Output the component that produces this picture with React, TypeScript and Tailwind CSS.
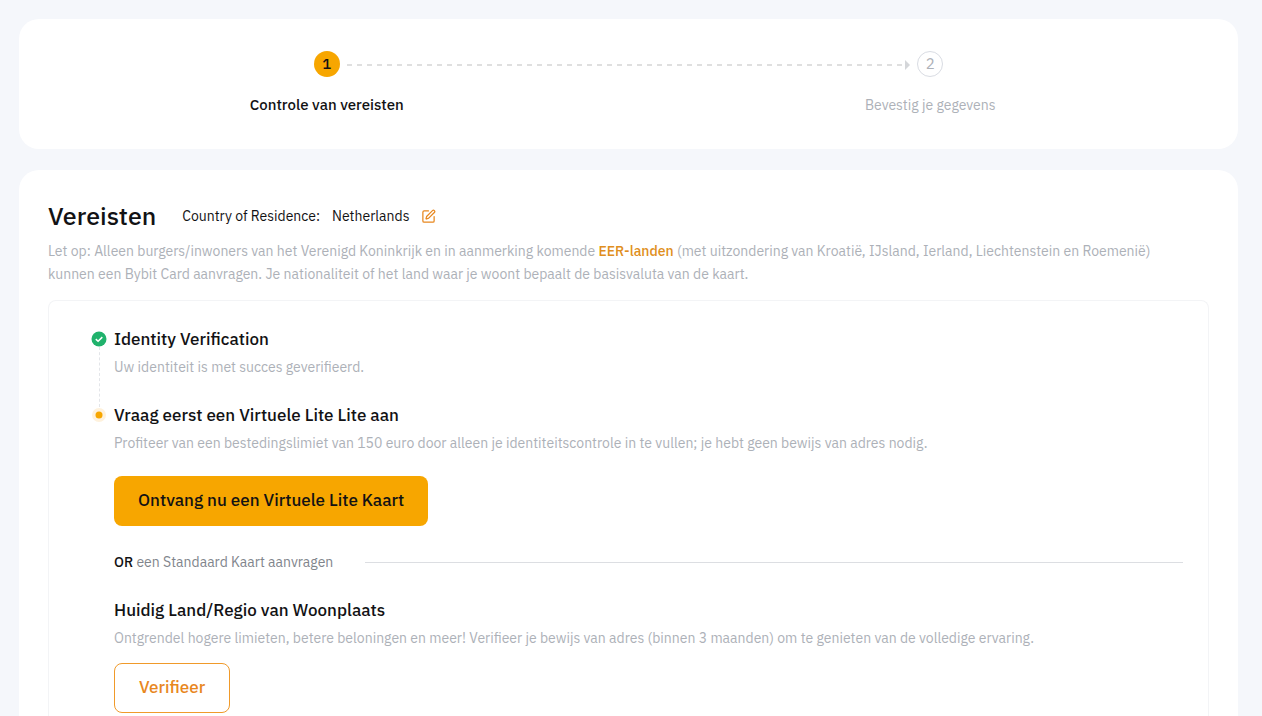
import { SquarePen } from 'lucide-react';
import type { ReactNode } from 'react';

function Stepper() {
  return (
    <section className="rounded-[20px] bg-white px-1.5 pt-8 pb-8">
      <ol className="grid grid-cols-4 items-center gap-y-4 text-sm leading-6">
        <li className="contents">
          <span className="col-span-2 col-start-1 row-start-1 flex size-[26px] items-center justify-center justify-self-center rounded-full bg-[#f7a600] text-[15px] font-medium text-[#121214]">
            1
          </span>
          <span className="col-span-2 col-start-1 row-start-2 text-center text-[15px] font-medium text-[#121214]">
            Controle van vereisten
          </span>
        </li>
        <li className="contents">
          <span className="col-span-2 col-start-3 row-start-1 flex size-[26px] items-center justify-center justify-self-center rounded-full border border-[#d9dce3] text-[15px] text-[#adb1b8]">
            2
          </span>
          <span className="col-span-2 col-start-3 row-start-2 text-center text-[#adb1b8]">
            Bevestig je gegevens
          </span>
        </li>
        <li aria-hidden="true" className="col-span-2 col-start-2 row-start-1 mx-5 mt-0.5 flex items-center">
          <span className="h-0.5 flex-1 bg-[repeating-linear-gradient(90deg,#dfdfdf_0,#dfdfdf_5px,transparent_5px,transparent_10px)]" />
          <svg width="5" height="10" viewBox="0 0 5 10" fill="#d4d6d9">
            <path d="M0 0l5 5-5 5z" />
          </svg>
        </li>
      </ol>
    </section>
  );
}

function Requirement({ title, text, children }: { title: string; text: string; children?: ReactNode }) {
  return (
    <div>
      <h2 className="text-[17px] font-medium leading-6">{title}</h2>
      <p className="mt-1 text-sm leading-6 text-[#adb1b8]">{text}</p>
      {children}
    </div>
  );
}

export default function App() {
  return (
    <main className="flex min-h-screen flex-col gap-[21px] bg-[#f5f7fb] pt-[19px] pr-6 pl-[19px] font-['IBM_Plex_Sans','Inter',sans-serif] text-[#121214]">
      <Stepper />

      <section className="flex-1 rounded-t-[20px] bg-white px-[29px] pt-7">
        <div className="flex items-center">
          <h1 className="text-[25px] font-medium leading-9">Vereisten</h1>
          <span className="ml-[26px] text-sm">Country of Residence:</span>
          <span className="ml-3 text-sm">Netherlands</span>
          <button type="button" aria-label="Edit country" className="ml-3 text-[#e8871e]">
            <SquarePen className="size-[15px]" />
          </button>
        </div>

        <p className="mt-1.5 text-sm leading-[23px] text-[#adb1b8]">
          Let op: Alleen burgers/inwoners van het Verenigd Koninkrijk en in aanmerking komende{' '}
          <a href="#eer" className="font-medium text-[#e08e20]">EER-landen</a>{' '}
          (met uitzondering van Kroatië, IJsland, Ierland, Liechtenstein en Roemenië)
          <br />
          kunnen een Bybit Card aanvragen. Je nationaliteit of het land waar je woont bepaalt de basisvaluta van de kaart.
        </p>

        <div className="mt-3.5 rounded-t-lg border border-b-0 border-[#f3f4f6] pt-[26px] pr-[25px] pb-7 pl-[42px]">
          <div className="flex gap-[7px]">
            {/* Timeline */}
            <div className="flex w-4 shrink-0 flex-col items-center pt-1">
              <svg width="16" height="16" viewBox="0 0 16 16" fill="none" aria-label="Done">
                <circle cx="8" cy="8" r="7.5" fill="#20b26c" />
                <path d="M4.8 8.1l2.3 2.2 4.2-4.2" stroke="#fff" strokeWidth="1.5" />
              </svg>
              <span className="h-[60px] border-l border-dashed border-[#e3e5e9]" />
              <svg width="16" height="16" viewBox="0 0 16 16" aria-label="Current">
                <circle cx="8" cy="8" r="7" fill="#fef1dc" />
                <circle cx="8" cy="8" r="3.5" fill="#f7a600" />
              </svg>
            </div>

            <div className="min-w-0 flex-1">
              <Requirement title="Identity Verification" text="Uw identiteit is met succes geverifieerd." />

              <div className="mt-6">
                <Requirement
                  title="Vraag eerst een Virtuele Lite Lite aan"
                  text="Profiteer van een bestedingslimiet van 150 euro door alleen je identiteitscontrole in te vullen; je hebt geen bewijs van adres nodig."
                >
                  <button
                    type="button"
                    className="mt-[21px] h-[50px] rounded-lg bg-[#f7a600] px-6 text-[17px] font-medium"
                  >
                    Ontvang nu een Virtuele Lite Kaart
                  </button>
                </Requirement>
              </div>

              <div className="mt-6 flex items-center gap-8 text-sm leading-6">
                <p className="text-[#81858c]">
                  <strong className="font-medium text-[#121214]">OR</strong> een Standaard Kaart aanvragen
                </p>
                <span className="h-px flex-1 bg-[#dcdee2]" />
              </div>

              <div className="mt-6">
                <Requirement
                  title="Huidig Land/Regio van Woonplaats"
                  text="Ontgrendel hogere limieten, betere beloningen en meer! Verifieer je bewijs van adres (binnen 3 maanden) om te genieten van de volledige ervaring."
                >
                  <button
                    type="button"
                    className="mt-[13px] h-[50px] rounded-lg border border-[#f09a2a] px-6 text-[17px] font-medium text-[#e8871e]"
                  >
                    Verifieer
                  </button>
                </Requirement>
              </div>
            </div>
          </div>
        </div>
      </section>
    </main>
  );
}
